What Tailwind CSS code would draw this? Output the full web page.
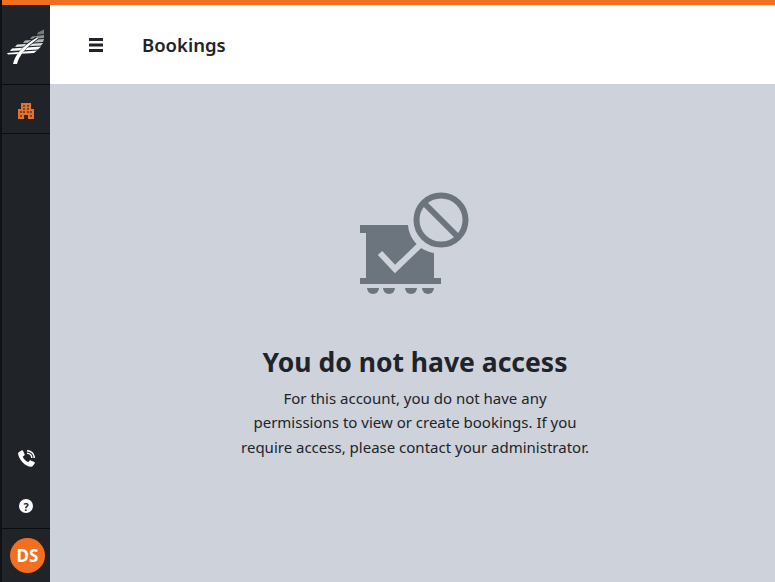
<!DOCTYPE html>
<html lang="en">
<head>
    <meta charset="UTF-8">
    <meta name="viewport" content="width=device-width, initial-scale=1.0">
    <title>Bookings</title>
    <script src="https://cdn.jsdelivr.net/npm/@tailwindcss/browser@4"></script>
</head>
<body class="font-['Noto_Sans',sans-serif]">

<div class="flex h-[582px] w-[775px] overflow-hidden border-l-2 border-[#0f1114] bg-[#ced2db]">

  <!-- Sidebar -->
  <aside class="flex w-[48px] shrink-0 flex-col bg-[#202429]">
    <div class="h-[5px] bg-[#f26f21]"></div>
    <div class="flex h-[80px] items-center justify-center border-b border-[#0c0d0f] pt-[4px]">
      <svg class="w-[38px] h-[36px]" viewBox="0 0 38 36" fill="#fff">
        <path d="M31 3.500 L37 0.500 L37 5 L30 5.500 Z" fill="#77797c"/>
        <path d="M25 7.500 L37 6 L37 9 L23 10 Z" fill="#8f9194"/>
        <path d="M18 11.500 L37 10 L36 13 L16 14 Z" fill="#b5b7b9"/>
        <path d="M10 15.500 L36 14 L34 16.500 L8 18 Z" fill="#e0e1e2"/>
        <path d="M5 19.500 L34 17.500 L31 20.500 L3 22 Z"/>
        <path d="M0 24 L30 21.500 L27 24 L1 25.500 Z"/>
        <path d="M8 35 C10 26 16 19 30 9" fill="none" stroke="#202429" stroke-width="3.500"/>
        <path d="M6 35 C8 26 14 18 30 8.500 L31 9.500 C18 19 12 27 10 35 Z"/>
      </svg>
    </div>
    <div class="flex h-[49px] items-center justify-center border-b border-[#0c0d0f] pt-[4px]">
      <svg class="w-[16px] h-[16px]" viewBox="0 0 16 16" fill="#e8702a" shape-rendering="crispEdges">
        <path d="M3 0H13V6H16V16H0V6H3Z"/>
        <g fill="#6f4a34">
          <rect x="5" y="2" width="2" height="2"/>
          <rect x="9" y="2" width="2" height="2"/>
          <rect x="5" y="5" width="2" height="2"/>
          <rect x="9" y="5" width="2" height="2"/>
          <rect x="2" y="8" width="2" height="2"/>
          <rect x="5" y="8" width="2" height="2"/>
          <rect x="9" y="8" width="2" height="2"/>
          <rect x="12" y="8" width="2" height="2"/>
          <rect x="2" y="12" width="2" height="2"/>
          <rect x="12" y="12" width="2" height="2"/>
        </g>
        <rect x="6" y="12" width="4" height="4" fill="#2f2723"/>
      </svg>
    </div>

    <div class="mt-auto flex h-[48px] items-center justify-center pt-[4px]">
      <svg class="w-[17px] h-[17px]" viewBox="0 0 17 17" fill="#fff">
        <path d="M3.600 0.400 L1 2 C0.200 2.600 0 3.400 0.200 4.400 C1.500 10 6.500 15.500 12.500 16.800 C13.500 17 14.400 16.600 15 15.800 L16.600 13.500 C17 13 16.800 12.400 16.300 12.100 L12.800 10.400 C12.300 10.200 11.800 10.300 11.500 10.700 L10.200 12.300 C8 11.200 5.800 9 4.700 6.800 L6.300 5.500 C6.700 5.200 6.800 4.700 6.600 4.200 L5 0.800 C4.700 0.300 4.100 0.100 3.600 0.400 Z"/>
        <path d="M9 3.200 A4.800 4.800 0 0 1 13.800 8 M9 0.700 A7.300 7.300 0 0 1 16.300 8" fill="none" stroke="#fff" stroke-width="1.500"/>
      </svg>
    </div>
    <div class="flex h-[48px] items-center justify-center pt-[4px]">
      <div class="flex h-[14px] w-[14px] items-center justify-center rounded-full bg-white text-[11px] font-bold leading-none text-[#202429]">?</div>
    </div>
    <div class="flex h-[54px] items-center justify-center border-t border-[#0c0d0f] pl-[3px]">
      <div class="flex h-[35px] w-[35px] items-center justify-center rounded-full bg-[#f26f21] text-[17px] font-bold text-white">DS</div>
    </div>
  </aside>

  <div class="flex min-w-0 flex-1 flex-col">
    <div class="h-[5px] bg-[#f26f21]"></div>

    <!-- Header -->
    <header class="flex h-[79px] items-center bg-white pl-[39px]">
      <svg class="w-[14px] h-[14px]" viewBox="0 0 14 14" fill="#202429">
        <rect y="0" width="14" height="3"/>
        <rect y="5.500" width="14" height="3"/>
        <rect y="11" width="14" height="3"/>
      </svg>
      <h1 class="ml-[39px] text-[18.500px] font-semibold text-[#202429]">Bookings</h1>
    </header>

    <!-- No access message -->
    <main class="flex flex-1 flex-col items-center pl-[5px] pt-[108px] text-center text-[#202429]">
      <svg class="w-[110px] h-[105px]" viewBox="0 0 110 105" fill="#6c757d">
        <path d="M0 33H48C49 47 60 59 74 61V86H81V92H0V86H6V41H0Z"/>
        <path d="M20 61 L35 77 L60 53" fill="none" stroke="#ced2db" stroke-width="6"/>
        <circle cx="81" cy="28" r="24.500" fill="none" stroke="#6c757d" stroke-width="6"/>
        <path d="M64 11 L98 45" fill="none" stroke="#6c757d" stroke-width="6"/>
        <path d="M7 96H19A6 6 0 0 1 7 96Z"/>
        <path d="M23 96H35A6 6 0 0 1 23 96Z"/>
        <path d="M45 96H57A6 6 0 0 1 45 96Z"/>
        <path d="M62 96H74A6 6 0 0 1 62 96Z"/>
      </svg>
      <h2 class="mt-[47px] text-[26.500px] font-bold leading-[36px]">You do not have access</h2>
      <p class="mt-[5.500px] text-[15px] leading-[24.500px]">For this account, you do not have any<br>permissions to view or create bookings. If you<br>require access, please contact your administrator.</p>
    </main>
  </div>

</div>

</body>
</html>
